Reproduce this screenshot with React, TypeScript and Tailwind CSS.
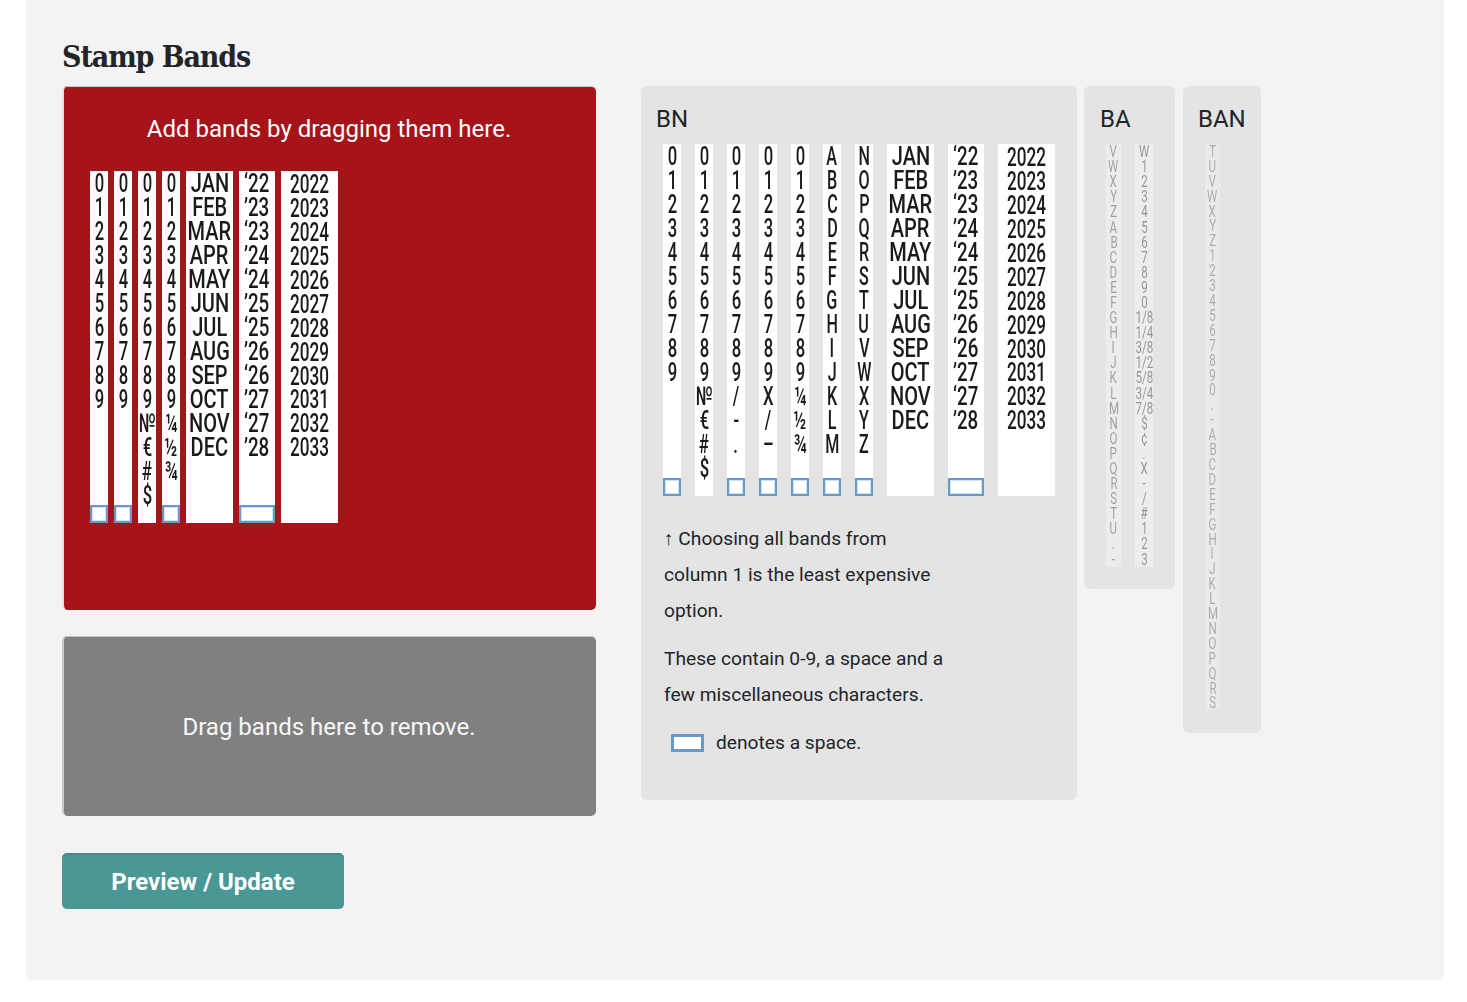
const digits = ["0","1","2","3","4","5","6","7","8","9"];
const months = ["JAN","FEB","MAR","APR","MAY","JUN","JUL","AUG","SEP","OCT","NOV","DEC"];
const shortYears = ["‘22","’23","‘23","’24","‘24","’25","‘25","’26","‘26","’27","‘27","’28"];
const years = ["2022","2023","2024","2025","2026","2027","2028","2029","2030","2031","2032","2033"];

function Space() {
  return (
    <div className="mt-auto h-[18px] w-full shrink-0 border-2 border-[#6699cc] bg-white shadow-[inset_0_0_0_1px_#d3e2f1]" />
  );
}

function Band({ items, w, space, squeeze = "scale-x-[0.64]" }: { items: string[]; w: string; space?: boolean; squeeze?: string }) {
  return (
    <div className={`flex h-[352px] shrink-0 flex-col items-center bg-white ${w}`}>
      {items.map((t, i) => (
        <div key={i} className="flex h-[24px] w-full shrink-0 items-center justify-center whitespace-nowrap text-[26px] font-medium leading-[24px] text-[#1a1a1a]">
          <span className={`inline-block blur-[0.4px] ${squeeze}`}>{t}</span>
        </div>
      ))}
      {space && <Space />}
    </div>
  );
}

function YearBand() {
  return (
    <div className="flex h-[352px] w-[57px] shrink-0 flex-col items-center bg-white pt-[1.5px]">
      {years.map((t, i) => (
        <div key={i} className="flex h-[23.9px] w-full shrink-0 items-center justify-center whitespace-nowrap text-[26px] font-medium leading-[24px] text-[#1a1a1a]">
          <span className="inline-block scale-x-[0.66] blur-[0.4px]">{t}</span>
        </div>
      ))}
    </div>
  );
}

function SmallBand({ items, w, tone, rows }: { items: string[]; w: string; tone: string; rows: string }) {
  return (
    <div className={`flex shrink-0 flex-col items-center bg-white ${w} ${tone}`}>
      {items.map((t, i) => (
        <div key={i} className={`flex w-full shrink-0 items-center justify-center whitespace-nowrap text-[16px] leading-[15px] text-black ${rows}`}>
          <span className="inline-block scale-x-[0.72] blur-[0.3px]">{t}</span>
        </div>
      ))}
    </div>
  );
}

const ba1 = "V W X Y Z A B C D E F G H I J K L M N O P Q R S T U . -".split(" ");
const ba2 = "W 1 2 3 4 5 6 7 8 9 0 1/8 1/4 3/8 1/2 5/8 3/4 7/8 $ ¢ . X - / # 1 2 3".split(" ");
const ban = "T U V W X Y Z 1 2 3 4 5 6 7 8 9 0 . - A B C D E F G H I J K L M N O P Q R S".split(" ");

export default function App() {
  return (
    <div className="h-[1002px] overflow-hidden bg-white text-[#212529] [font-family:'Roboto',sans-serif]">
      <div className="ml-[26px] flex h-[980px] w-[1418px] flex-col rounded-b-[6px] bg-[#f3f3f3] px-[36px] pt-[36px]">
        <h1 className="h-[50px] text-[30px] font-bold leading-[42px] tracking-[-1.1px] text-[#212529] [font-family:'DejaVu_Serif_Condensed','DejaVu_Serif',serif]">Stamp Bands</h1>
        <div className="flex items-start">
          <div className="w-[534px] shrink-0">
            <div className="h-[524px] rounded-[5px] border-t border-l-2 border-t-[#c4c4c4] border-l-[#f0dcdc] bg-[#a6141a] pl-[26px] pt-[26px]">
              <p className="h-[58px] pr-[28px] text-center text-[24px] leading-[32px] text-white">Add bands by dragging them here.</p>
              <div className="flex gap-[6px]">
                <Band items={digits} w="w-[18px]" space />
                <Band items={digits} w="w-[18px]" space />
                <Band items={[...digits, "№", "€", "#", "$"]} w="w-[18px]" />
                <Band items={[...digits, "¼", "½", "¾"]} w="w-[18px]" space />
                <Band items={months} w="w-[47px]" squeeze="scale-x-[0.77]" />
                <Band items={shortYears} w="w-[36px]" space squeeze="scale-x-[0.72]" />
                <YearBand />
              </div>
            </div>
            <div className="mt-[26px] flex h-[180px] items-center justify-center rounded-[5px] border-t border-l-2 border-t-[#c4c4c4] border-l-[#c8c8c8] bg-[#808080] pr-[2px] text-[24px] text-[#f8f8f8]">
              Drag bands here to remove.
            </div>
            <button className="mt-[37px] flex h-[56px] w-[282px] items-center justify-center rounded-[5px] border-t-2 border-[#44888a] bg-[#499896] text-[24px] font-bold text-white">
              Preview / Update
            </button>
          </div>
          <div className="ml-[45px] flex items-start">
            <div className="h-[714px] w-[436px] rounded-[6px] bg-[#e4e4e4] pl-[15px] pt-[16px]">
              <h2 className="h-[42px] text-[24px] leading-[34px]">BN</h2>
              <div className="ml-[7px] flex gap-[14px]">
                <Band items={digits} w="w-[18px]" space />
                <Band items={[...digits, "№", "€", "#", "$"]} w="w-[18px]" />
                <Band items={[...digits, "/", "-", "."]} w="w-[18px]" space />
                <Band items={[...digits, "X", "/", "–"]} w="w-[18px]" space />
                <Band items={[...digits, "¼", "½", "¾"]} w="w-[18px]" space />
                <Band items={"A B C D E F G H I J K L M".split(" ")} w="w-[18px]" space squeeze="scale-x-[0.62]" />
                <Band items={"N O P Q R S T U V W X Y Z".split(" ")} w="w-[18px]" space squeeze="scale-x-[0.62]" />
                <Band items={months} w="w-[47px]" squeeze="scale-x-[0.77]" />
                <Band items={shortYears} w="w-[36px]" space squeeze="scale-x-[0.72]" />
                <YearBand />
              </div>
              <div className="ml-[8px] mt-[25px] w-[285px] text-[19.2px] leading-[36px]">
                <p>↑ Choosing all bands from column 1 is the least expensive option.</p>
                <p className="mt-[12px]">These contain 0-9, a space and a few miscellaneous characters.</p>
                <div className="mt-[12px] flex items-center">
                  <span className="ml-[7px] h-[18px] w-[33px] border-[3px] border-[#6699cc] bg-white" />
                  <span className="ml-[12px]">denotes a space.</span>
                </div>
              </div>
            </div>
            <div className="ml-[7px] h-[503px] w-[91px] rounded-[6px] bg-[#e4e4e4] pl-[16px] pt-[16px]">
              <h2 className="h-[42px] text-[24px] leading-[34px]">BA</h2>
              <div className="ml-[6px] flex gap-[14px]">
                <SmallBand items={ba1} w="w-[15px]" tone="opacity-30" rows="h-[15.1px]" />
                <SmallBand items={ba2} w="w-[18px]" tone="opacity-35" rows="h-[15.1px]" />
              </div>
            </div>
            <div className="ml-[8px] h-[647px] w-[78px] rounded-[6px] bg-[#e4e4e4] pl-[15px] pt-[16px]">
              <h2 className="h-[42px] text-[24px] leading-[34px]">BAN</h2>
              <div className="ml-[7px] flex">
                <SmallBand items={ban} w="w-[15px]" tone="opacity-25" rows="h-[14.92px]" />
              </div>
            </div>
          </div>
        </div>
      </div>
    </div>
  );
}
